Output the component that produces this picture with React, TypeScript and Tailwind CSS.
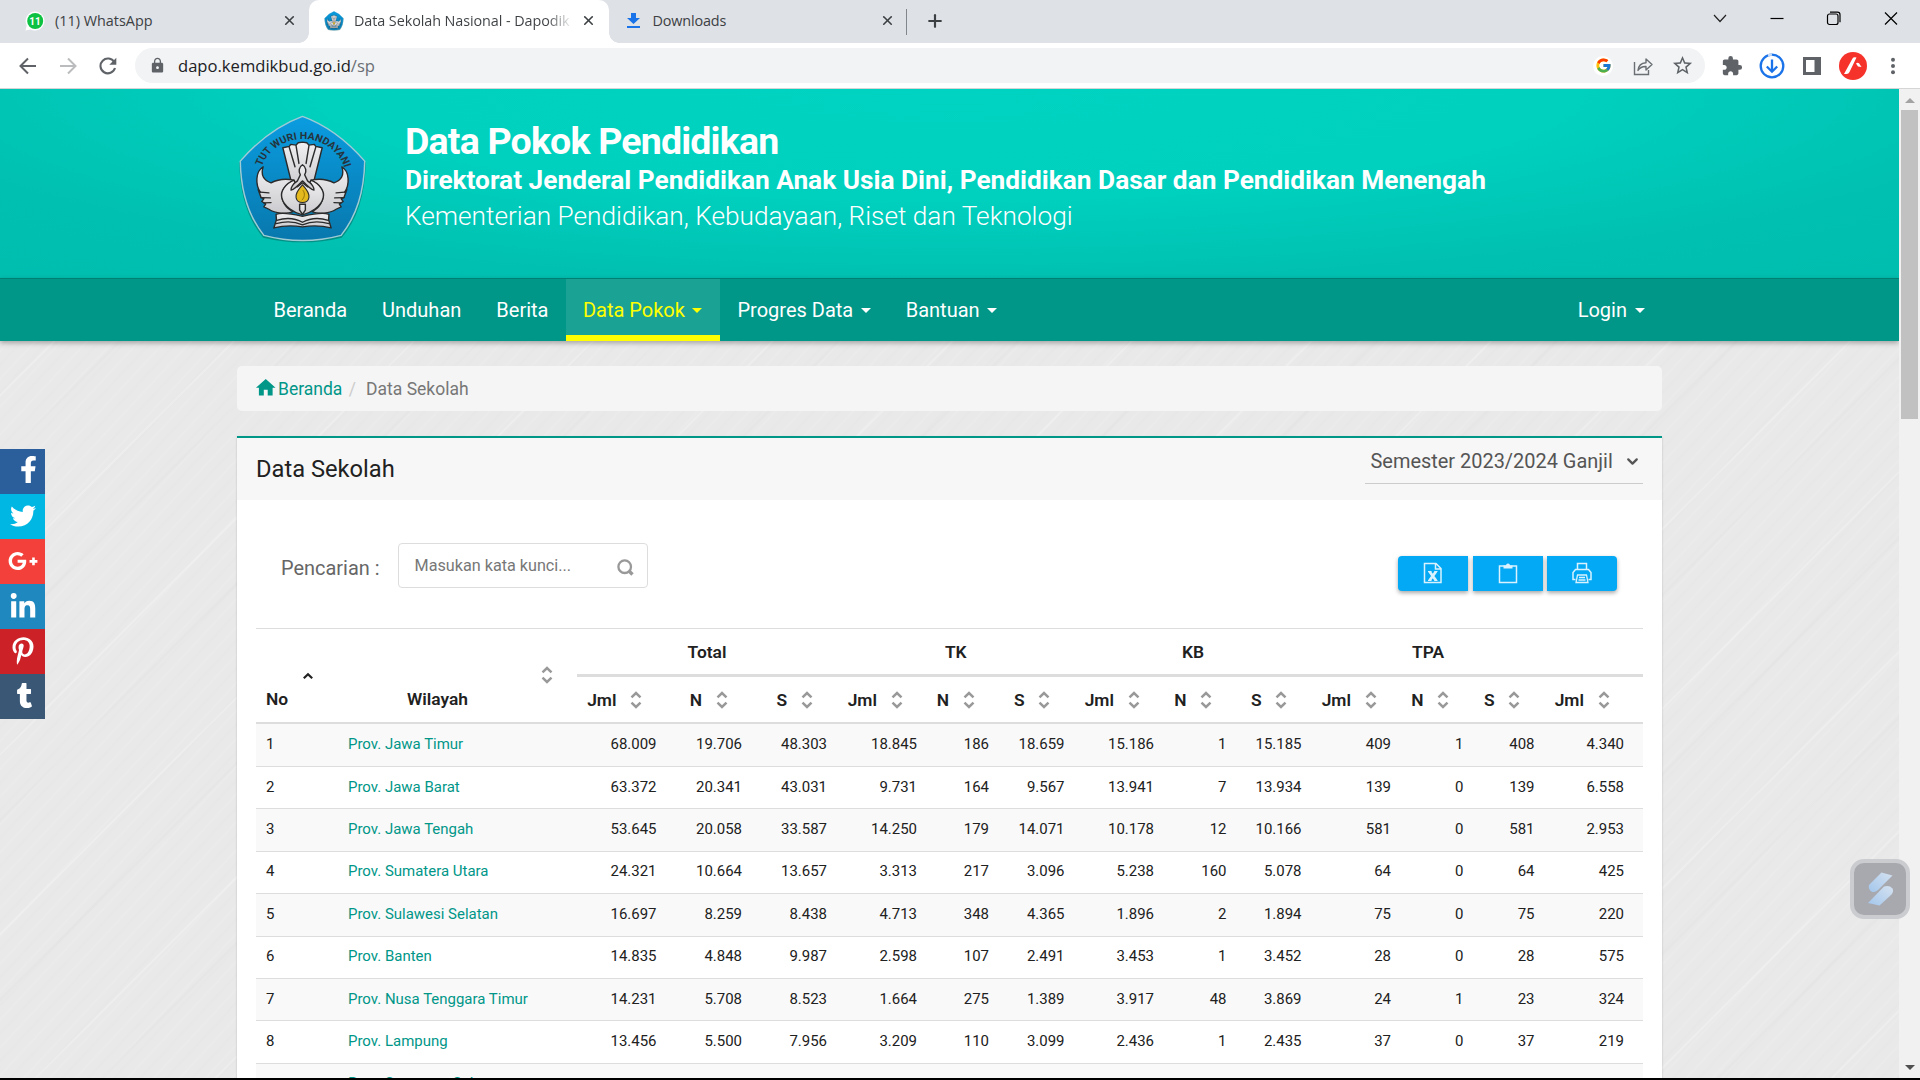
import type { ReactNode } from 'react';
import { ChevronDown, X, Plus } from 'lucide-react';
import { FaFacebookF, FaTwitter, FaGooglePlusG, FaLinkedinIn, FaPinterestP, FaTumblr } from 'react-icons/fa';
import { FcGoogle } from 'react-icons/fc';
import { MdExtension, MdLock, MdStarBorder, MdHome } from 'react-icons/md';

/* ---------- Logo ---------- */

function Crest({ className, label = false }: { className: string; label?: boolean }) {
  const ink = '#2b2b2b';
  return (
    <svg className={className} viewBox="44 40 372 392" preserveAspectRatio="none">
      <defs>
        <linearGradient id="crestBlue" x1="0" y1="0" x2="0" y2="1">
          <stop offset="0" stopColor="#0a9ce0" />
          <stop offset="1" stopColor="#0878ad" />
        </linearGradient>
        <linearGradient id="crestSilver" x1="0" y1="0" x2="0" y2="1">
          <stop offset="0" stopColor="#f0f0f2" />
          <stop offset="1" stopColor="#cbcbcf" />
        </linearGradient>
      </defs>
      <path d="M230 56 Q330 92 407 186 Q404 330 340 410 Q230 438 120 410 Q56 330 53 186 Q130 92 230 56Z" fill="#04564f" opacity="0.450" />
      <path d="M230 47 Q325 84 404 181 Q402 318 338 403 Q230 434 122 403 Q58 318 56 181 Q135 84 230 47Z" fill="url(#crestBlue)" stroke="#9fcbd6" strokeWidth="4" strokeLinejoin="round" />
      {label && (
        <>
          <path id="crestArc" d="M112 214 A121 121 0 0 1 350 214" fill="none" />
          <text fontFamily="Roboto, sans-serif" fontWeight="700" fontSize="30" fill="#25343c">
            <textPath href="#crestArc" startOffset="18" textLength="304" lengthAdjust="spacingAndGlyphs">
              TUT WURI HANDAYANI
            </textPath>
          </text>
        </>
      )}
      <g fill="url(#crestSilver)" stroke={ink} strokeWidth="4" strokeLinejoin="round" strokeLinecap="round">
        <path d="M175 141 L193 137 L197 131 L212 133 L218 126 L230 124 L242 126 L248 133 L263 131 L267 137 L285 141 L262 240 L248 262 L212 262 L198 240Z" />
        <path d="M193 140 L209 198 M212 135 L220 188 M248 135 L240 188 M267 140 L251 198" fill="none" />
        <path d="M120 198 C98 212 98 252 112 274 L106 266 L114 290 L122 293 L116 302 L127 309 L122 318 L136 325 C154 338 186 340 204 332 C182 322 172 300 172 280 C174 262 190 248 206 238 C180 232 156 238 142 246 C122 240 112 222 120 198Z" />
        <path d="M340 198 C362 212 362 252 348 274 L354 266 L346 290 L338 293 L344 302 L333 309 L338 318 L324 325 C306 338 274 340 256 332 C278 322 288 300 288 280 C286 262 270 248 254 238 C280 232 304 238 318 246 C338 240 348 222 340 198Z" />
        <path d="M112 274 L136 276 M114 290 L140 291 M122 306 L142 305 M348 274 L324 276 M346 290 L320 291 M338 306 L318 305" fill="none" />
        <path d="M206 238 C180 250 168 272 172 290 C178 318 208 336 230 342 C252 336 282 318 288 290 C292 272 280 250 254 238 L244 258 L230 246 L216 258Z" />
        <path d="M230 192 C220 198 218 212 224 222 L216 240 C204 248 196 262 198 268 C208 266 218 254 230 240 C242 254 252 266 262 268 C264 262 256 248 244 240 L236 222 C242 212 240 198 230 192Z" />
        <path d="M222 310 L238 310 L238 328 L230 340 L222 328Z" />
        <path d="M156 340 C176 332 206 340 230 346 C254 340 284 332 304 340 L303 356 L310 381 C284 374 252 374 230 378 C208 374 176 374 150 381 L157 356Z" />
        <path d="M158 358 C182 350 210 352 230 364 C250 352 278 350 302 358 M156 368 C182 360 210 362 230 372 C250 362 278 360 304 368" fill="none" />
      </g>
      <path d="M230 252 C244 268 250 278 248 290 C246 300 238 305 230 305 C222 305 214 300 212 290 C210 278 216 268 230 252Z" fill="#e3b91d" stroke={ink} strokeWidth="3" />
      <path d="M231 268 C238 278 236 290 228 298" fill="none" stroke="#8a6a08" strokeWidth="2.5" />
    </svg>
  );
}

/* ---------- Browser chrome ---------- */

function CloseX({ className }: { className: string }) {
  return <X className={className} size={15} strokeWidth={2.6} color="#3c4043" />;
}

function DownloadsIcon() {
  return (
    <svg width="13" height="16" viewBox="0 0 13 16" fill="#1a73e8">
      <path d="M4 0h5v5h4L6.500 11 0 5h4zM0 13h13v2H0z" />
    </svg>
  );
}

function TabStrip() {
  return (
    <div className="flex h-[43px] shrink-0 bg-[#dee1e6] text-[14.4px] text-[#3c4043]">
      <div className="flex w-[309px] items-center pb-[2px] pl-[25px]">
        <svg width="20" height="20" viewBox="0 0 20 20">
          <path d="M10 0.500a9.500 9.500 0 1 1-4.500 17.900L.5 19.500l1.200-5A9.500 9.500 0 0 1 10 .5z" fill="#fff" />
          <circle cx="10.200" cy="10" r="8" fill="#0dc143" />
          <text x="10" y="13.800" textAnchor="middle" fontSize="10" fontWeight="700" fontFamily="Roboto, sans-serif" fill="#fff">11</text>
        </svg>
        <span className="ml-[10px] w-[120px] whitespace-nowrap">(11) WhatsApp</span>
        <CloseX className="ml-[107px]" />
      </div>
      <div className="relative flex w-[300px] items-center rounded-t-[10px] bg-white pb-[2px] pl-[15px]">
        <span className="absolute bottom-0 -left-[10px] h-[10px] w-[10px] bg-[radial-gradient(circle_at_0_0,transparent_9.500px,white_10px)]" />
        <span className="absolute bottom-0 -right-[10px] h-[10px] w-[10px] bg-[radial-gradient(circle_at_100%_0,transparent_9.500px,white_10px)]" />
        <Crest className="h-5 w-5 shrink-0" />
        <span className="ml-[10px] w-[219px] overflow-hidden bg-gradient-to-r from-[#3c4043] from-88% to-transparent bg-clip-text tracking-[-0.006em] whitespace-nowrap text-transparent">
          Data Sekolah Nasional - Dapodik
        </span>
        <CloseX className="ml-[8px] shrink-0" />
      </div>
      <div className="flex w-[297px] items-center pb-[2px] pl-[17.500px]">
        <DownloadsIcon />
        <span className="ml-[13px] w-[120px] tracking-[-0.010em]">Downloads</span>
        <CloseX className="ml-[107.500px]" />
      </div>
      <div className="mt-[9px] h-[26px] w-px bg-[#80868b]" />
      <Plus className="mt-[11px] ml-[18px]" size={20} strokeWidth={2.600} color="#3c4043" />
      <div className="ml-auto flex pr-[21px]">
        <svg className="mt-[10px] mr-[41px]" width="16" height="16" viewBox="0 0 16 16" fill="none" stroke="#222" strokeWidth="1.200">
          <path d="M2 5l6 6.500L14 5" />
        </svg>
        <svg className="mt-[10px] mr-[41px]" width="16" height="16" viewBox="0 0 16 16" stroke="#000" strokeWidth="1.200">
          <path d="M1.500 8.500h13" />
        </svg>
        <svg className="mt-[10px] mr-[41.500px]" width="16" height="16" viewBox="0 0 16 16" fill="none" stroke="#000" strokeWidth="1.200">
          <rect x="1.500" y="4" width="10.500" height="10.500" rx="2" />
          <path d="M4 2.200h7.500a2.500 2.500 0 0 1 2.500 2.500v7.500" />
        </svg>
        <svg className="mt-[10px]" width="16" height="16" viewBox="0 0 16 16" stroke="#000" strokeWidth="1.200">
          <path d="M2 2.500l12 12M14 2.500l-12 12" />
        </svg>
      </div>
    </div>
  );
}

function Toolbar() {
  return (
    <div className="flex h-[46px] shrink-0 items-center border-b border-[#d5d5d5] bg-white">
      <svg className="ml-[19px]" width="18" height="18" viewBox="0 0 18 18" fill="none" stroke="#5f6368" strokeWidth="2">
        <path d="M17 9H2M9 1.500L1.500 9 9 16.500" />
      </svg>
      <svg className="ml-[22px]" width="18" height="18" viewBox="0 0 18 18" fill="none" stroke="#babcbe" strokeWidth="2">
        <path d="M1 9h15M9 1.500L16.500 9 9 16.500" />
      </svg>
      <svg className="ml-[22px]" width="18" height="18" viewBox="0 0 18 18">
        <path d="M15.300 5.200A7.400 7.400 0 1 0 16 11" fill="none" stroke="#5f6368" strokeWidth="2.100" />
        <path d="M17.300 .8v7h-7z" fill="#5f6368" />
      </svg>
      <div className="ml-[18px] flex h-[35px] w-[1570px] items-center rounded-full bg-[#f1f3f4] pl-[14px]">
        <MdLock size={17} color="#5f6368" />
        <div className="ml-[12px] pt-px text-[16.600px] text-[#202124]">
          dapo.kemdikbud.go.id<span className="text-[#6b6f74]">/sp</span>
        </div>
        <div className="ml-auto flex h-5 w-5 items-center justify-center rounded-full bg-white">
          <FcGoogle size={17} />
        </div>
        <svg className="ml-[20px]" width="20" height="20" viewBox="0 0 20 20" fill="none" stroke="#6b6f74" strokeWidth="1.400">
          <path d="M1.500 6v12.500h14V14" />
          <path d="M5 14.500c.5-5.500 3-7.500 8-7.800V3l6 5.500-6 5.500v-3.500c-4-.2-6 .8-8 4z" strokeLinejoin="round" />
        </svg>
        <MdStarBorder className="mr-[11px] ml-[18px]" size={23} color="#5f6368" />
      </div>
      <MdExtension className="ml-[16px]" size={22} color="#5f6368" />
      <svg className="ml-[16px]" width="26" height="26" viewBox="0 0 26 26" fill="none" stroke="#1a73e8" strokeWidth="2.300">
        <circle cx="13" cy="13" r="11.300" />
        <path d="M13 6.500v12M7.800 13.500l5.200 5.200 5.200-5.200" />
        <path d="M9 2.400a11.300 11.300 0 0 1 4-.7" stroke="#c6d9f7" />
      </svg>
      <svg className="ml-[18px]" width="18" height="18" viewBox="0 0 18 18">
        <path d="M0 0h18v18H0z" fill="#5f6368" />
        <path d="M3 3h8.500v12H3z" fill="#fff" />
      </svg>
      <svg className="ml-[18px]" width="28" height="28" viewBox="0 0 28 28">
        <circle cx="14" cy="14" r="14" fill="#f5332a" />
        <path d="M5 22L13.500 6.500q.8-1.500 2.500-1.300L17.500 5.500 10.500 20q-.9 1.900-2.800 2z" fill="#fff" />
        <path d="M17 11.500q1.500-1.500 3-.3L22.500 15l-3.500-.5z" fill="#fff" />
      </svg>
      <svg className="ml-[22.500px]" width="6" height="18" viewBox="0 0 6 18" fill="#5f6368">
        <circle cx="3" cy="2.800" r="2" />
        <circle cx="3" cy="9" r="2" />
        <circle cx="3" cy="15.200" r="2" />
      </svg>
    </div>
  );
}

/* ---------- Site header ---------- */

function SiteHeader() {
  return (
    <header className="flex h-[189px] shrink-0 bg-[radial-gradient(ellipse_90%_160%_at_50%_0,#00d3c1_0%,#00d1bf_35%,#00c0b1_64%,#00bcac_100%)] pl-[236px] text-white">
      <Crest label className="mt-[25px] h-[131px] w-[133px]" />
      <div className="ml-[36px] whitespace-nowrap">
        <h1 className="mt-[30px] text-[37.500px] leading-[44px] font-bold tracking-[-0.820px]">Data Pokok Pendidikan</h1>
        <h2 className="mt-[-1px] text-[26.250px] leading-[36px] font-bold">
          Direktorat Jenderal Pendidikan Anak Usia Dini, Pendidikan Dasar dan Pendidikan Menengah
        </h2>
        <h3 className="text-[26.220px] leading-[36px] font-light">Kementerian Pendidikan, Kebudayaan, Riset dan Teknologi</h3>
      </div>
    </header>
  );
}

function Caret() {
  return <span className="ml-[7.500px] inline-block h-0 w-0 border-x-[5px] border-t-[5px] border-x-transparent border-t-current" />;
}

function NavItem({ children, caret = false }: { children: ReactNode; caret?: boolean }) {
  return (
    <a className="flex items-center px-[17.500px] whitespace-nowrap">
      {children}
      {caret && <Caret />}
    </a>
  );
}

function Navbar() {
  return (
    <nav className="relative z-10 flex h-[63px] shrink-0 border-t border-[#007f73] bg-[#009688] pl-[256px] text-[20px] text-white shadow-[0_2px_5px_rgba(0,0,0,0.300)]">
      <NavItem>Beranda</NavItem>
      <NavItem>Unduhan</NavItem>
      <NavItem>Berita</NavItem>
      <a className="flex w-[154px] items-center border-b-[6px] border-[#ffff00] bg-[#1aa294] pt-[6px] pl-[17px] whitespace-nowrap text-[#ffff00]">
        Data Pokok
        <Caret />
      </a>
      <NavItem caret>Progres Data</NavItem>
      <NavItem caret>Bantuan</NavItem>
      <div className="mr-[237px] ml-auto flex">
        <NavItem caret>Login</NavItem>
      </div>
    </nav>
  );
}

/* ---------- Table ---------- */

const COLS =
  'grid grid-cols-[82px_239px_89.500px_85.500px_85px_90px_72px_75.500px_89.500px_72.500px_75px_89.500px_72.500px_71px_98.500px]';

const ROWS: [string, string[]][] = [
  ['Prov. Jawa Timur', ['68.009', '19.706', '48.303', '18.845', '186', '18.659', '15.186', '1', '15.185', '409', '1', '408', '4.340']],
  ['Prov. Jawa Barat', ['63.372', '20.341', '43.031', '9.731', '164', '9.567', '13.941', '7', '13.934', '139', '0', '139', '6.558']],
  ['Prov. Jawa Tengah', ['53.645', '20.058', '33.587', '14.250', '179', '14.071', '10.178', '12', '10.166', '581', '0', '581', '2.953']],
  ['Prov. Sumatera Utara', ['24.321', '10.664', '13.657', '3.313', '217', '3.096', '5.238', '160', '5.078', '64', '0', '64', '425']],
  ['Prov. Sulawesi Selatan', ['16.697', '8.259', '8.438', '4.713', '348', '4.365', '1.896', '2', '1.894', '75', '0', '75', '220']],
  ['Prov. Banten', ['14.835', '4.848', '9.987', '2.598', '107', '2.491', '3.453', '1', '3.452', '28', '0', '28', '575']],
  ['Prov. Nusa Tenggara Timur', ['14.231', '5.708', '8.523', '1.664', '275', '1.389', '3.917', '48', '3.869', '24', '1', '23', '324']],
  ['Prov. Lampung', ['13.456', '5.500', '7.956', '3.209', '110', '3.099', '2.436', '1', '2.435', '37', '0', '37', '219']],
  ['Prov. Sumatera Selatan', []],
];

const SUB = ['Jml', 'N', 'S', 'Jml', 'N', 'S', 'Jml', 'N', 'S', 'Jml', 'N', 'S', 'Jml'];

function SortIcon() {
  return (
    <svg width="12" height="18" viewBox="0 0 12 18" fill="none" stroke="#999" strokeWidth="2.500" className="shrink-0">
      <path d="M1.500 6.300L6 2l4.500 4.300M1.500 11.700L6 16l4.500-4.300" />
    </svg>
  );
}

function SchoolTable() {
  return (
    <div className="mr-[19px] ml-[19px] border-t border-[#ddd] text-[#212121]">
      <div className={`${COLS} h-[95px] grid-rows-[45px_48px] border-b-2 border-[#ddd] text-[17.400px] font-semibold`}>
        <div className="row-span-2 flex items-end pb-[10px] pl-[10px]">
          <span>No</span>
          <svg className="mb-[32px] ml-[13.500px]" width="12" height="8" viewBox="0 0 12 8" fill="none" stroke="#212121" strokeWidth="2.200">
            <path d="M1.800 6.300L6 2.200l4.200 4.100" />
          </svg>
        </div>
        <div className="row-span-2 flex items-end pb-[10px]">
          <span className="ml-[69px] w-[61px]">Wilayah</span>
          <div className="mb-[28px] ml-[73px]">
            <SortIcon />
          </div>
        </div>
        <div className="col-span-3 flex items-center justify-center pt-[2px]">Total</div>
        <div className="col-span-3 flex items-center justify-center pt-[2px]">TK</div>
        <div className="col-span-3 flex items-center justify-center pt-[2px]">KB</div>
        <div className="col-span-3 flex items-center justify-center pt-[2px]">TPA</div>
        <div />
        {SUB.map((s, i) => (
          <div key={i} className="flex items-center justify-end gap-[13.500px] border-t-[3px] border-[#ddd] pr-[24.500px] last:pr-[33.500px]">
            <span className="pt-[2px]">{s}</span>
            <SortIcon />
          </div>
        ))}
      </div>
      {ROWS.map(([name, values], i) => (
        <div
          key={name}
          className={`${COLS} ${i === 0 ? 'h-[43px]' : 'h-[42.400px]'} items-center border-b border-[#ddd] pb-[1.500px] text-[14.980px] odd:bg-white even:bg-[#f9f9f9]`}
        >
          <div className="pl-[10px]">{values.length > 0 ? i + 1 : ''}</div>
          <div className="pl-[10px] text-[#009688]">{name}</div>
          {values.map((v, j) => (
            <div key={j} className="pr-[10px] text-right last:pr-[19px]">
              {v}
            </div>
          ))}
        </div>
      ))}
    </div>
  );
}

/* ---------- Main content ---------- */

function ExportButton({ children, className }: { children: ReactNode; className: string }) {
  return (
    <button className={`flex h-[35px] w-[70px] items-center justify-center bg-[#03a9f4] pb-px shadow-[0_2px_4px_rgba(0,0,0,0.350)] ${className}`}>
      <svg width="22" height="22" viewBox="0 0 22 22" fill="none" stroke="#d9f2fe" strokeWidth="1.500">
        {children}
      </svg>
    </button>
  );
}

function Content() {
  return (
    <main className="w-[1425px]">
      <div className="mt-[25px] flex h-[45px] items-center rounded-[5px] bg-[#f5f5f5] pl-[17px] text-[17.500px]">
        <MdHome className="mb-[2px]" size={23.500} color="#009688" />
        <span className="mt-px ml-[0.500px] text-[#009688]">Beranda</span>
        <span className="mt-px ml-[6.500px] text-[#ccc]">/</span>
        <span className="mt-px ml-[10px] text-[#777]">Data Sekolah</span>
      </div>
      <section className="mt-[25px] h-[700px] border-t-2 border-[#009688] bg-white shadow-[0_1px_2px_rgba(0,0,0,0.200)]">
        <div className="flex h-[62px] justify-between bg-[#f7f7f7] pr-[19px] pl-[19px]">
          <h4 className="mt-[15px] text-[23.700px] leading-[32px] text-[#212121]">Data Sekolah</h4>
          <div className="flex h-[46px] w-[278px] items-center border-b border-[#ccc] pl-[5.500px] text-[19.960px] text-[#555]">
            <span className="pt-[2px] whitespace-nowrap">Semester 2023/2024 Ganjil</span>
            <ChevronDown className="mt-[1px] ml-[11px]" size={17} strokeWidth={3.200} />
          </div>
        </div>
        <div className="flex h-[128px] pl-[44px]">
          <div className="mt-[56px] w-[117px] text-[19.960px] leading-[24px] text-[#666]">Pencarian :</div>
          <div className="mt-[43px] flex h-[45px] w-[250px] justify-between rounded-[4px] border border-[#ddd] pr-[13px] pl-[15.500px]">
            <span className="mt-[11px] text-[16.200px] leading-[22px] text-[#777]">Masukan kata kunci...</span>
            <svg className="mt-[15px]" width="17" height="17" viewBox="0 0 17 17" fill="none" stroke="#999">
              <circle cx="7.700" cy="7.700" r="6.300" strokeWidth="2.300" />
              <path d="M12 12l3.500 3.500" strokeWidth="3.300" />
            </svg>
          </div>
          <div className="mt-[56px] mr-[45px] ml-auto flex gap-[4.500px]">
            <ExportButton className="rounded-l-[4px]">
              <path d="M2.500 1.500h11.500l5 5v14h-16.500zM13.500 1.500v5.500h5.500" />
              <path d="M7.500 9.500l6.500 9M14 9.500l-6.500 9" strokeWidth="2.800" />
              <path d="M6 9.500h3.500M12.500 9.500h3M6 18.500h3.500M12.500 18.500h3" strokeWidth="1.200" />
            </ExportButton>
            <ExportButton className="">
              <path d="M2.500 4h17v16.500h-17z" />
              <path d="M6.500 6.500v-3h2.500a2 2 0 0 1 4 0h2.500v3z" fill="#d9f2fe" stroke="none" />
            </ExportButton>
            <ExportButton className="rounded-r-[4px]">
              <path d="M6.500 7.500V1.500h9v6M4.500 17.500h-2.500V10.500l2.500-3h13l2.500 3v7h-2.500" />
              <path d="M6.500 13h9l1.500 7.500h-12zM8 15.500h6M7.500 18h7" strokeWidth="1.300" />
            </ExportButton>
          </div>
        </div>
        <SchoolTable />
      </section>
    </main>
  );
}

function SocialBar() {
  return (
    <aside className="mt-[108px] mr-[192px] w-[45px] self-start text-white">
      <div className="flex h-[45px] items-center justify-center bg-[#2b5f9b] pb-[4px] pl-[11px]">
        <FaFacebookF size={27} />
      </div>
      <div className="flex h-[45px] items-center justify-center bg-[#00b6e3] pb-px pl-px">
        <FaTwitter size={26} />
      </div>
      <div className="flex h-[45px] items-center justify-center bg-[#f3403a] pb-[1px] pl-px">
        <FaGooglePlusG size={30} />
      </div>
      <div className="flex h-[45px] items-center justify-center bg-[#1f88be] pl-px">
        <FaLinkedinIn size={28} />
      </div>
      <div className="flex h-[45px] items-center justify-center bg-[#cc2127] pb-[2px] pl-[1px]">
        <FaPinterestP size={28} />
      </div>
      <div className="flex h-[45px] items-center justify-center bg-[#3a5876] pb-[2px] pl-[3px]">
        <FaTumblr size={25} />
      </div>
    </aside>
  );
}

function Scrollbar() {
  return (
    <div className="flex w-[21px] flex-col items-center bg-[#f1f1f1]">
      <span className="mt-[9px] border-x-[5px] border-b-[5px] border-x-transparent border-b-[#a3a3a3]" />
      <span className="mt-[7px] h-[309px] w-[17px] bg-[#c1c1c1]" />
      <span className="mt-auto mb-[8px] border-x-[5px] border-t-[5px] border-x-transparent border-t-[#505050]" />
    </div>
  );
}

function FloatingWidget() {
  return (
    <div className="absolute top-[859px] left-[1850px] z-20 flex h-[60px] w-[60px] items-center justify-center rounded-[14px] border-4 border-[#cbccd0] bg-[#a8a9af]">
      <svg width="28" height="36" viewBox="0 0 28 36">
        <defs>
          <linearGradient id="widgetBlue" x1="1" y1="0" x2="0" y2="1">
            <stop offset="0" stopColor="#d5e2f0" />
            <stop offset="1" stopColor="#a3c6ec" />
          </linearGradient>
        </defs>
        <path d="M15.500 1.500L26.500 4.500 12 19q-3.500 3-6.500 1.500Q2 18 3 14z" fill="url(#widgetBlue)" />
        <path d="M18 15.500q5.500-1.500 8.500 2 1.500 3-1 6L13.500 34.500 2 32z" fill="url(#widgetBlue)" />
      </svg>
    </div>
  );
}

export default function App() {
  return (
    <div className="relative flex h-[1080px] w-[1920px] flex-col overflow-hidden border-b-2 border-black bg-white font-['Open_Sans',sans-serif]">
      <TabStrip />
      <Toolbar />
      <div className="flex min-h-0 flex-1">
        <div className="flex w-[1899px] flex-col overflow-hidden font-[Roboto,sans-serif]">
          <SiteHeader />
          <Navbar />
          <div className="flex min-h-0 flex-1 bg-[#e9e9e9] bg-[repeating-linear-gradient(135deg,transparent_0_37px,rgba(255,255,255,0.220)_38px_39px,transparent_40px_83px,rgba(0,0,0,0.012)_84px_86px,transparent_87px_127px),repeating-linear-gradient(133deg,transparent_0_5px,rgba(255,255,255,0.100)_7px,transparent_9px_14px,rgba(0,0,0,0.008)_16px,transparent_19px)]">
            <SocialBar />
            <Content />
          </div>
        </div>
        <Scrollbar />
      </div>
      <FloatingWidget />
    </div>
  );
}
